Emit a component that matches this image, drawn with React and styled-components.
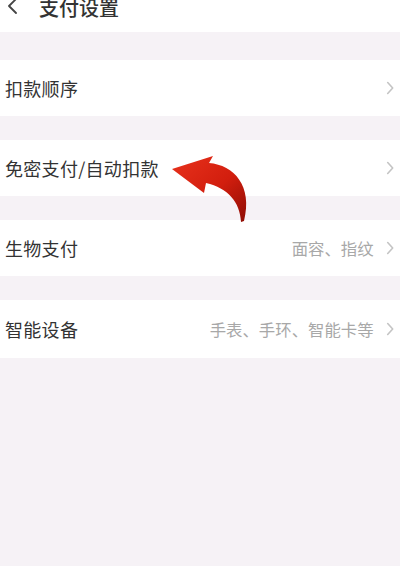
import React from "react";
import styled, { createGlobalStyle } from "styled-components";

const GlobalStyle = createGlobalStyle`
  html, body {
    margin: 0;
    padding: 0;
    background: #f6f2f6;
    font-family: "Noto Sans CJK SC", "Noto Sans", sans-serif;
  }
`;

const Page = styled.div`
  position: relative;
  width: 400px;
  height: 566px;
  overflow: hidden;
  background: #f6f2f6;
`;

const Header = styled.div`
  height: 32px;
  background: #ffffff;
  display: flex;
  align-items: flex-start;
  gap: 20px;
  padding-left: 7px;
`;

const Title = styled.div`
  font-size: 20px;
  line-height: 20px;
  margin-top: -2px;
  color: #333;
  font-weight: 500;
`;

const List = styled.div`
  display: flex;
  flex-direction: column;
  gap: ${(p) => p.$gap || 24}px;
  padding-top: 28px;
`;

const Row = styled.div`
  height: ${(p) => p.$h || 56}px;
  background: #ffffff;
  display: flex;
  align-items: center;
  padding: 0 6px 0 5px;
`;

const Label = styled.div`
  flex: 1;
  font-size: 18px;
  letter-spacing: 0.3px;
  color: #333;
`;

const Value = styled.div`
  font-size: 16.4px;
  color: #a8a8a8;
  margin-right: 12px;
`;

const Chevron = ({ size = 14, color = "#c4c4c4", w = 1.6 }) => (
  <svg width={size * 0.6} height={size} viewBox="0 0 8 14">
    <path d="M1.5 1.5 L6.5 7 L1.5 12.5" fill="none" stroke={color} strokeWidth={w} strokeLinecap="round" strokeLinejoin="round" />
  </svg>
);

const Back = () => (
  <svg width="12" height="18" viewBox="0 0 12 18" style={{ marginTop: -2 }}>
    <path d="M9 1 L2 8 L9 15" fill="none" stroke="#444" strokeWidth="1.8" strokeLinecap="round" strokeLinejoin="round" />
  </svg>
);

const ArrowBox = styled.svg`
  position: absolute;
  left: 160px;
  top: 150px;
  width: 100px;
  height: 80px;
`;

const RedArrow = () => (
  <ArrowBox viewBox="0 0 100 80">
    <defs>
      <linearGradient id="ag" x1="0" y1="0" x2="1" y2="1">
        <stop offset="0" stopColor="#e8321c" />
        <stop offset="0.55" stopColor="#d21e0e" />
        <stop offset="1" stopColor="#8e0d05" />
      </linearGradient>
    </defs>
    <path
      d="M12 19 L53 6 L49 13 C74 15 93 36 84 71 L81 72 C80 52 68 38 46 33 L44 43 Z"
      fill="url(#ag)"
    />
  </ArrowBox>
);

export default function App() {
  return (
    <>
      <GlobalStyle />
      <Page>
        <Header>
          <Back />
          <Title>支付设置</Title>
        </Header>
        <List>
          <Row $h={56}>
            <Label>扣款顺序</Label>
            <Chevron />
          </Row>
          <Row $h={56}>
            <Label>免密支付/自动扣款</Label>
            <Chevron />
          </Row>
          <Row $h={56}>
            <Label>生物支付</Label>
            <Value>面容、指纹</Value>
            <Chevron />
          </Row>
          <Row $h={58}>
            <Label>智能设备</Label>
            <Value>手表、手环、智能卡等</Value>
            <Chevron />
          </Row>
        </List>
        <RedArrow />
      </Page>
    </>
  );
}
